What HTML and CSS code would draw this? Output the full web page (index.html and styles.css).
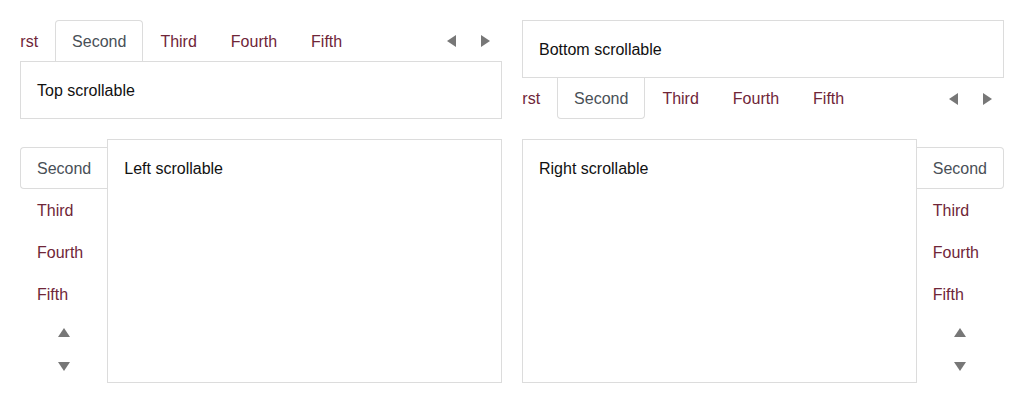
FILE: index.html
```html
<!DOCTYPE html>
<html lang="en">
<head>
<meta charset="utf-8">
<title>Scrollable tabs</title>
<link rel="stylesheet" href="styles.css">
</head>
<body>
<div class="grid">
  <div class="tabs tabs-top">
    <div class="strip">
      <div class="viewport"><div class="track">
        <a class="tab">First</a><a class="tab active">Second</a><a class="tab">Third</a><a class="tab">Fourth</a><a class="tab">Fifth</a>
      </div></div>
      <button class="arrow"><svg width="9" height="12" viewBox="0 0 9 12"><polygon points="9,0 9,12 0,6"/></svg></button>
      <button class="arrow"><svg width="9" height="12" viewBox="0 0 9 12"><polygon points="0,0 0,12 9,6"/></svg></button>
    </div>
    <div class="panel">Top scrollable</div>
  </div>

  <div class="tabs tabs-bottom">
    <div class="panel">Bottom scrollable</div>
    <div class="strip">
      <div class="viewport"><div class="track">
        <a class="tab">First</a><a class="tab active">Second</a><a class="tab">Third</a><a class="tab">Fourth</a><a class="tab">Fifth</a>
      </div></div>
      <button class="arrow"><svg width="9" height="12" viewBox="0 0 9 12"><polygon points="9,0 9,12 0,6"/></svg></button>
      <button class="arrow"><svg width="9" height="12" viewBox="0 0 9 12"><polygon points="0,0 0,12 9,6"/></svg></button>
    </div>
  </div>

  <div class="tabs tabs-left">
    <div class="vstrip">
      <div class="vviewport"><div class="vtrack">
        <a class="tab">First</a><a class="tab active">Second</a><a class="tab">Third</a><a class="tab">Fourth</a><a class="tab">Fifth</a>
      </div></div>
      <button class="varrow"><svg width="12" height="9" viewBox="0 0 12 9"><polygon points="0,9 12,9 6,0"/></svg></button>
      <button class="varrow"><svg width="12" height="9" viewBox="0 0 12 9"><polygon points="0,0 12,0 6,9"/></svg></button>
    </div>
    <div class="panel vpanel">Left scrollable</div>
  </div>

  <div class="tabs tabs-right">
    <div class="panel vpanel">Right scrollable</div>
    <div class="vstrip">
      <div class="vviewport"><div class="vtrack">
        <a class="tab">First</a><a class="tab active">Second</a><a class="tab">Third</a><a class="tab">Fourth</a><a class="tab">Fifth</a>
      </div></div>
      <button class="varrow"><svg width="12" height="9" viewBox="0 0 12 9"><polygon points="0,9 12,9 6,0"/></svg></button>
      <button class="varrow"><svg width="12" height="9" viewBox="0 0 12 9"><polygon points="0,0 12,0 6,9"/></svg></button>
    </div>
  </div>
</div>
</body>
</html>
```

FILE: styles.css
```css
* { box-sizing: border-box; }
html, body { margin: 0; background: #fff; }
body {
  padding: 20px;
  font-family: "Liberation Sans", Arial, sans-serif;
  font-size: 16px;
  line-height: 24px;
  color: #111;
}
.grid {
  display: grid;
  grid-template-columns: 482px 482px;
  column-gap: 20px;
  row-gap: 20px;
  align-items: start;
}
.tabs { display: flex; flex-direction: column; }
.tabs-left, .tabs-right { flex-direction: row; align-items: stretch; }

.panel {
  border: 1px solid #dcdcdc;
  padding: 17px 16px 15px;
  height: 58px;
}
.vpanel { flex: 1; height: 244px; }

.strip { display: flex; height: 41px; }
.viewport { flex: 1; overflow: hidden; min-width: 0; }
.track { display: flex; margin-left: -30px; white-space: nowrap; }

.tab {
  display: block;
  padding: 9px 16px 7px;
  color: #6f2638;
  border: 1px solid transparent;
  text-decoration: none;
  white-space: nowrap;
  flex: none;
}
.tab.active { color: #495057; background: #fff; border-color: #dcdcdc; }

.tabs-top .tab { border-bottom-width: 0; border-radius: 4px 4px 0 0; }
.tabs-bottom .tab { border-top-width: 0; border-radius: 0 0 4px 4px; }

.arrow, .varrow {
  border: 0;
  background: none;
  padding: 0;
  margin: 0;
  display: flex;
  align-items: center;
  justify-content: center;
  fill: #777;
  flex: none;
}
.arrow { width: 34px; height: 41px; }
.varrow { width: 100%; height: 34px; }

.vstrip { display: flex; flex-direction: column; }
.vviewport { flex: 1; overflow: hidden; min-height: 0; }
.vtrack { display: flex; flex-direction: column; margin-top: -34px; }
.tabs-left .tab { border-right-width: 0; border-radius: 4px 0 0 4px; }
.tabs-right .tab { border-left-width: 0; border-radius: 0 4px 4px 0; }
```
